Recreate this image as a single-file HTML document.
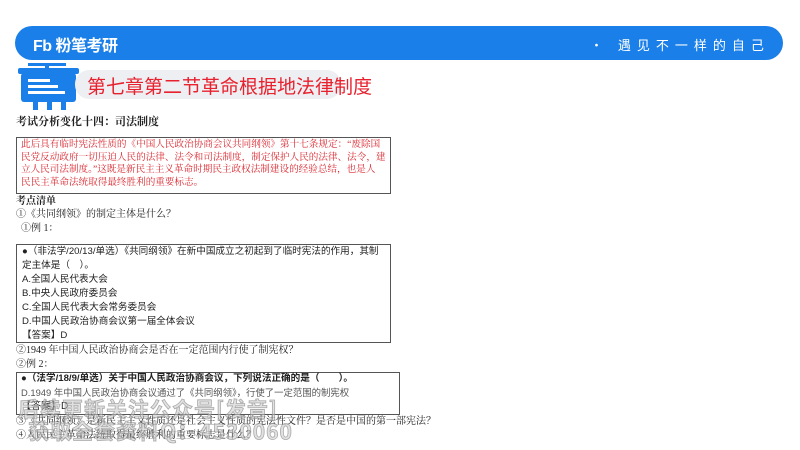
<!DOCTYPE html>
<html><head><meta charset="utf-8"><style>
*{margin:0;padding:0;box-sizing:border-box}
body{width:800px;height:450px;background:#fff;position:relative;overflow:hidden;font-family:"Liberation Serif","Noto Serif CJK SC",serif;color:#222}
.a{position:absolute;white-space:nowrap}
.banner{position:absolute;left:15px;top:26px;width:768px;height:34px;background:#1a7fe8;border-radius:17px}
.logo{left:33px;top:32px;color:#fff;font:bold 16px "Liberation Sans","Noto Sans CJK SC",sans-serif;letter-spacing:-0.5px}
.slogan{left:590px;top:35px;color:#fff;font:13px "Noto Sans CJK SC",sans-serif;letter-spacing:6px}
.pill{position:absolute;left:75px;top:70px;width:266px;height:29px;background:#eeeff2;border-radius:14px}
.title{left:87px;top:72px;color:#e8212e;font:19px "Noto Sans CJK SC",sans-serif}
.s{font-size:10px;line-height:14px}
.sans{font-family:"Liberation Sans","Noto Sans CJK SC",sans-serif}
.box{position:absolute;border:1px solid #555}
.red{color:#d9262e}
.wm{font:bold 21px "Noto Sans CJK SC",sans-serif;color:rgba(200,200,200,0.55);-webkit-text-stroke:0.8px rgba(140,140,140,0.7);letter-spacing:1px}
</style></head><body>
<div class="banner"></div>
<div class="a logo">Fb 粉笔考研</div>
<div class="a slogan">· 遇见不一样的自己 ·</div>
<svg style="position:absolute;left:16px;top:63px" width="66" height="48" viewBox="0 0 66 48">
<rect x="12" y="0" width="38" height="3" fill="#1a7fe8"/>
<rect x="29" y="0" width="4" height="6" fill="#1a7fe8"/>
<rect x="2" y="5" width="61" height="6" rx="2" fill="#1a7fe8"/>
<rect x="5" y="10" width="55" height="29" rx="3" fill="#1a7fe8"/>
<rect x="12" y="16" width="22" height="3" fill="#fff"/>
<rect x="12" y="22" width="30" height="3" fill="#fff"/>
<rect x="12" y="28" width="37" height="3" fill="#fff"/>
<rect x="17" y="39" width="5" height="8" fill="#1a7fe8"/>
<rect x="31" y="39" width="5" height="8" fill="#1a7fe8"/>
<rect x="45" y="39" width="5" height="8" fill="#1a7fe8"/>
</svg>
<div class="pill"></div>
<div class="a title">第七章第二节革命根据地法律制度</div>
<div class="a" style="left:16px;top:113px;font-size:11px;font-weight:bold">考试分析变化十四：司法制度</div>
<div class="box" style="left:16px;top:137px;width:375px;height:57px"></div>
<div class="a s red" style="left:21px;top:139px;font-size:9.6px;line-height:12.5px">此后具有临时宪法性质的《中国人民政治协商会议共同纲领》第十七条规定：“废除国<br>民党反动政府一切压迫人民的法律、法令和司法制度，制定保护人民的法律、法令，建<br>立人民司法制度。”这既是新民主主义革命时期民主政权法制建设的经验总结，也是人<br>民民主革命法统取得最终胜利的重要标志。</div>
<div class="a s" style="left:16px;top:195px;font-weight:bold">考点清单</div>
<div class="a s" style="left:16px;top:208px">①《共同纲领》的制定主体是什么？</div>
<div class="a s" style="left:21px;top:222px">①例 1：</div>
<div class="box" style="left:16px;top:244px;width:375px;height:99px"></div>
<div class="a s sans" style="left:22px;top:245px;font-size:9.6px">●（非法学/20/13/单选）《共同纲领》在新中国成立之初起到了临时宪法的作用，其制<br>定主体是（　）。<br>A.全国人民代表大会<br>B.中央人民政府委员会<br>C.全国人民代表大会常务委员会<br>D.中国人民政治协商会议第一届全体会议<br>【答案】D</div>
<div class="a s" style="left:16px;top:344px">②1949 年中国人民政治协商会是否在一定范围内行使了制宪权？</div>
<div class="a s" style="left:16px;top:358px">②例 2：</div>
<div class="box" style="left:16px;top:372px;width:384px;height:43px"></div>
<div class="a s sans" style="left:21px;top:372px;font-weight:bold;font-size:9.6px">●（法学/18/9/单选）关于中国人民政治协商会议，下列说法正确的是（　　）。</div>
<div class="a s sans" style="left:21px;top:386px;color:#555;font-size:9.4px">D.1949 年中国人民政治协商会议通过了《共同纲领》，行使了一定范围的制宪权</div>
<div class="a s sans" style="left:21px;top:400px">【答案】D</div>
<div class="a s" style="left:16px;top:415px">③《共同纲领》是新民主主义性质还是社会主义性质的宪法性文件？是否是中国的第一部宪法？</div>
<div class="a s" style="left:16px;top:429px">④人民民主革命法统取得最终胜利的重要标志是什么？</div>
<div class="a wm" style="left:18px;top:394px">后续更新关注公众号[发音]</div>
<div class="a wm" style="left:28px;top:416px">获取全套资料Q：4530060</div>
</body></html>
